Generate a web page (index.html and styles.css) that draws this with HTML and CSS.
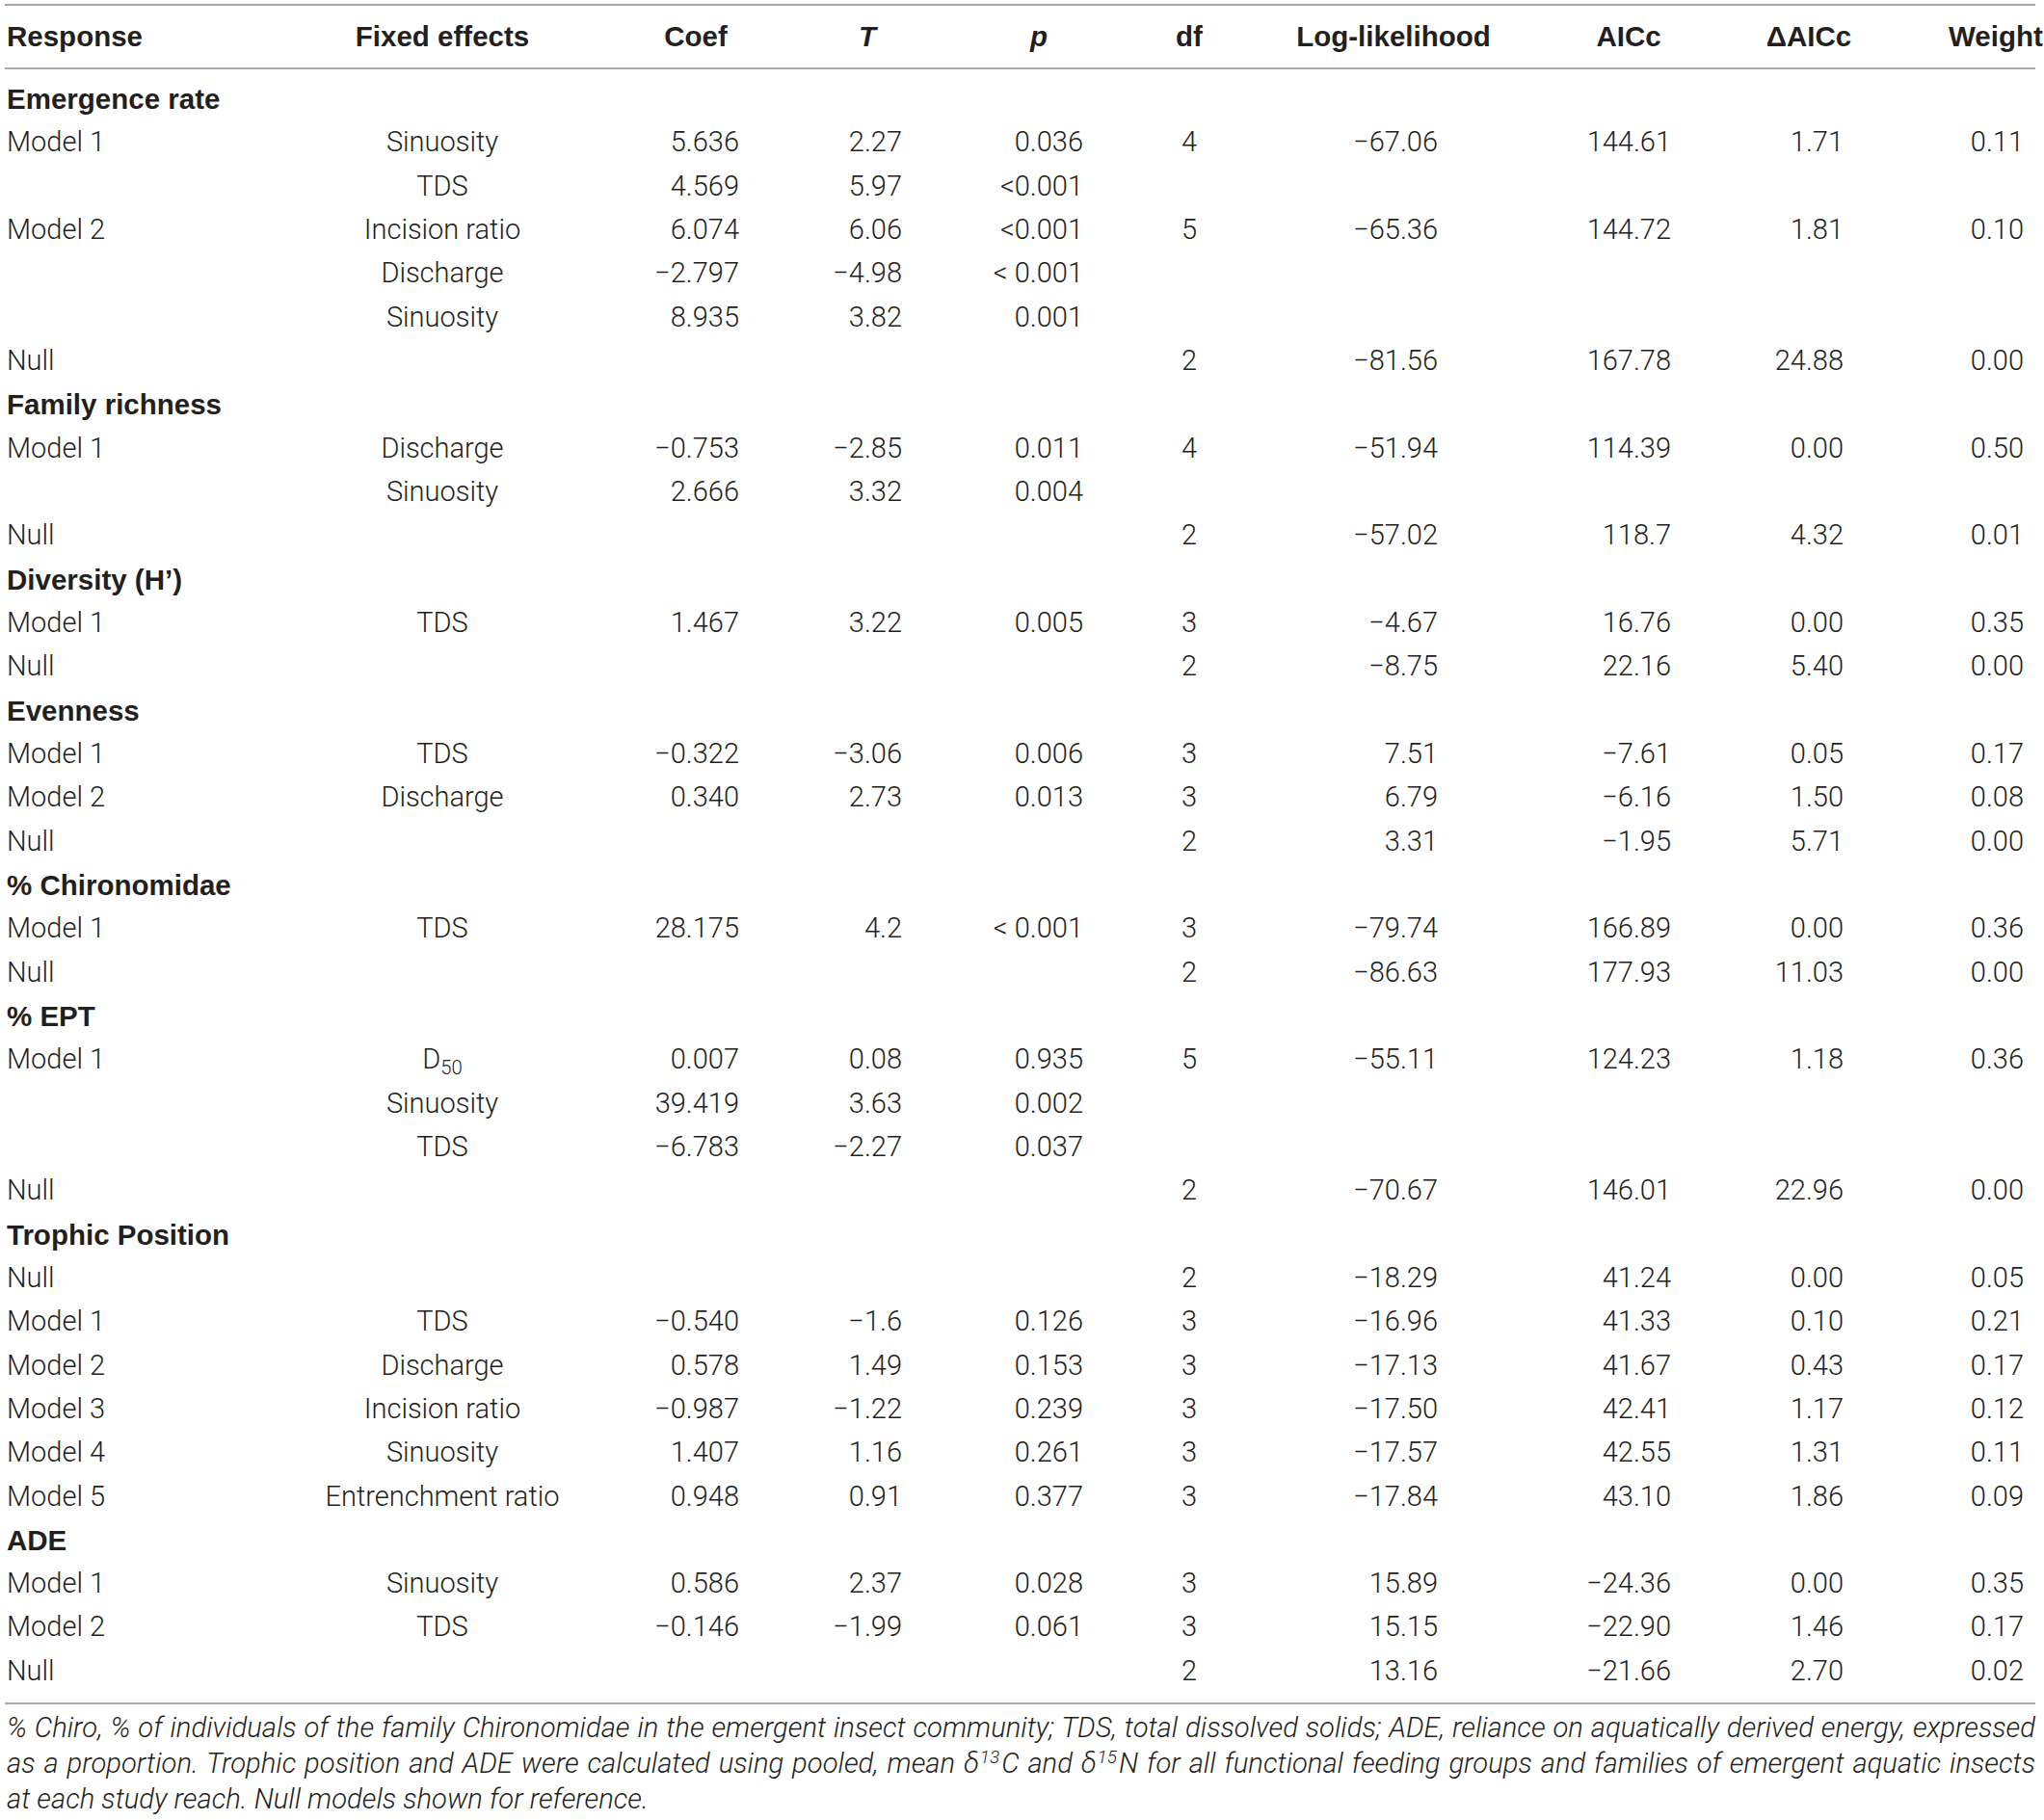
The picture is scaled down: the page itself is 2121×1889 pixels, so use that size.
FILE: index.html
```html
<!DOCTYPE html>
<html lang="en">
<head>
    <meta charset="UTF-8">
    <title>Model selection results</title>
    <link rel="stylesheet" href="styles.css">
</head>
<body>
    <div class="page">
        <table class="results">
            <colgroup>
                <col class="c-resp">
                <col class="c-fixed">
                <col class="c-coef">
                <col class="c-t">
                <col class="c-p">
                <col class="c-df">
                <col class="c-ll">
                <col class="c-aic">
                <col class="c-daic">
                <col class="c-w">
            </colgroup>
            <thead>
                <tr>
                    <th class="resp">Response</th>
                    <th>Fixed effects</th>
                    <th class="coef">Coef</th>
                    <th><i>T</i></th>
                    <th><i>p</i></th>
                    <th>df</th>
                    <th>Log-likelihood</th>
                    <th>AICc</th>
                    <th>ΔAICc</th>
                    <th class="weight">Weight</th>
                </tr>
            </thead>
            <tbody>
                <tr class="group"><td colspan="10">Emergence rate</td></tr>
                <tr><td>Model 1</td><td>Sinuosity</td><td>5.636</td><td>2.27</td><td>0.036</td><td>4</td><td>−67.06</td><td>144.61</td><td>1.71</td><td>0.11</td></tr>
                <tr><td></td><td>TDS</td><td>4.569</td><td>5.97</td><td>&lt;0.001</td><td></td><td></td><td></td><td></td><td></td></tr>
                <tr><td>Model 2</td><td>Incision ratio</td><td>6.074</td><td>6.06</td><td>&lt;0.001</td><td>5</td><td>−65.36</td><td>144.72</td><td>1.81</td><td>0.10</td></tr>
                <tr><td></td><td>Discharge</td><td>−2.797</td><td>−4.98</td><td>&lt; 0.001</td><td></td><td></td><td></td><td></td><td></td></tr>
                <tr><td></td><td>Sinuosity</td><td>8.935</td><td>3.82</td><td>0.001</td><td></td><td></td><td></td><td></td><td></td></tr>
                <tr><td>Null</td><td></td><td></td><td></td><td></td><td>2</td><td>−81.56</td><td>167.78</td><td>24.88</td><td>0.00</td></tr>

                <tr class="group"><td colspan="10">Family richness</td></tr>
                <tr><td>Model 1</td><td>Discharge</td><td>−0.753</td><td>−2.85</td><td>0.011</td><td>4</td><td>−51.94</td><td>114.39</td><td>0.00</td><td>0.50</td></tr>
                <tr><td></td><td>Sinuosity</td><td>2.666</td><td>3.32</td><td>0.004</td><td></td><td></td><td></td><td></td><td></td></tr>
                <tr><td>Null</td><td></td><td></td><td></td><td></td><td>2</td><td>−57.02</td><td>118.7</td><td>4.32</td><td>0.01</td></tr>

                <tr class="group"><td colspan="10">Diversity (H’)</td></tr>
                <tr><td>Model 1</td><td>TDS</td><td>1.467</td><td>3.22</td><td>0.005</td><td>3</td><td>−4.67</td><td>16.76</td><td>0.00</td><td>0.35</td></tr>
                <tr><td>Null</td><td></td><td></td><td></td><td></td><td>2</td><td>−8.75</td><td>22.16</td><td>5.40</td><td>0.00</td></tr>

                <tr class="group"><td colspan="10">Evenness</td></tr>
                <tr><td>Model 1</td><td>TDS</td><td>−0.322</td><td>−3.06</td><td>0.006</td><td>3</td><td>7.51</td><td>−7.61</td><td>0.05</td><td>0.17</td></tr>
                <tr><td>Model 2</td><td>Discharge</td><td>0.340</td><td>2.73</td><td>0.013</td><td>3</td><td>6.79</td><td>−6.16</td><td>1.50</td><td>0.08</td></tr>
                <tr><td>Null</td><td></td><td></td><td></td><td></td><td>2</td><td>3.31</td><td>−1.95</td><td>5.71</td><td>0.00</td></tr>

                <tr class="group"><td colspan="10">% Chironomidae</td></tr>
                <tr><td>Model 1</td><td>TDS</td><td>28.175</td><td>4.2</td><td>&lt; 0.001</td><td>3</td><td>−79.74</td><td>166.89</td><td>0.00</td><td>0.36</td></tr>
                <tr><td>Null</td><td></td><td></td><td></td><td></td><td>2</td><td>−86.63</td><td>177.93</td><td>11.03</td><td>0.00</td></tr>

                <tr class="group"><td colspan="10">% EPT</td></tr>
                <tr><td>Model 1</td><td>D<sub>50</sub></td><td>0.007</td><td>0.08</td><td>0.935</td><td>5</td><td>−55.11</td><td>124.23</td><td>1.18</td><td>0.36</td></tr>
                <tr><td></td><td>Sinuosity</td><td>39.419</td><td>3.63</td><td>0.002</td><td></td><td></td><td></td><td></td><td></td></tr>
                <tr><td></td><td>TDS</td><td>−6.783</td><td>−2.27</td><td>0.037</td><td></td><td></td><td></td><td></td><td></td></tr>
                <tr><td>Null</td><td></td><td></td><td></td><td></td><td>2</td><td>−70.67</td><td>146.01</td><td>22.96</td><td>0.00</td></tr>

                <tr class="group"><td colspan="10">Trophic Position</td></tr>
                <tr><td>Null</td><td></td><td></td><td></td><td></td><td>2</td><td>−18.29</td><td>41.24</td><td>0.00</td><td>0.05</td></tr>
                <tr><td>Model 1</td><td>TDS</td><td>−0.540</td><td>−1.6</td><td>0.126</td><td>3</td><td>−16.96</td><td>41.33</td><td>0.10</td><td>0.21</td></tr>
                <tr><td>Model 2</td><td>Discharge</td><td>0.578</td><td>1.49</td><td>0.153</td><td>3</td><td>−17.13</td><td>41.67</td><td>0.43</td><td>0.17</td></tr>
                <tr><td>Model 3</td><td>Incision ratio</td><td>−0.987</td><td>−1.22</td><td>0.239</td><td>3</td><td>−17.50</td><td>42.41</td><td>1.17</td><td>0.12</td></tr>
                <tr><td>Model 4</td><td>Sinuosity</td><td>1.407</td><td>1.16</td><td>0.261</td><td>3</td><td>−17.57</td><td>42.55</td><td>1.31</td><td>0.11</td></tr>
                <tr><td>Model 5</td><td>Entrenchment ratio</td><td>0.948</td><td>0.91</td><td>0.377</td><td>3</td><td>−17.84</td><td>43.10</td><td>1.86</td><td>0.09</td></tr>

                <tr class="group"><td colspan="10">ADE</td></tr>
                <tr><td>Model 1</td><td>Sinuosity</td><td>0.586</td><td>2.37</td><td>0.028</td><td>3</td><td>15.89</td><td>−24.36</td><td>0.00</td><td>0.35</td></tr>
                <tr><td>Model 2</td><td>TDS</td><td>−0.146</td><td>−1.99</td><td>0.061</td><td>3</td><td>15.15</td><td>−22.90</td><td>1.46</td><td>0.17</td></tr>
                <tr><td>Null</td><td></td><td></td><td></td><td></td><td>2</td><td>13.16</td><td>−21.66</td><td>2.70</td><td>0.02</td></tr>
            </tbody>
        </table>

        <div class="note">
            <span class="line">% Chiro, % of individuals of the family Chironomidae in the emergent insect community; TDS, total dissolved solids; ADE, reliance on aquatically derived energy, expressed</span>
            <span class="line">as a proportion. Trophic position and ADE were calculated using pooled, mean δ<sup>13</sup>C and δ<sup>15</sup>N for all functional feeding groups and families of emergent aquatic insects</span>
            <span class="line last">at each study reach. Null models shown for reference.</span>
        </div>
    </div>
</body>
</html>
```

FILE: styles.css
```css
body {
    margin: 0;
    padding: 0;
    background-color: #ffffff;
    color: #231f20;
    font-family: Roboto, "Liberation Sans", sans-serif;
    font-weight: 300;
}
.page {
    width: 2107px;
    padding: 4px 0 0 5px;
}
.results {
    width: 2107px;
    border-collapse: collapse;
    table-layout: fixed;
    font-size: 29px;
}
.c-resp { width: 295px; }
.c-fixed { width: 318px; }
.c-coef { width: 192px; }
.c-t { width: 180px; }
.c-p { width: 176px; }
.c-df { width: 136px; }
.c-ll { width: 288px; }
.c-aic { width: 200px; }
.c-daic { width: 174px; }
.c-w { width: 148px; }

.results thead tr {
    border-top: 2px solid #a7a7a7;
    border-bottom: 2px solid #a7a7a7;
}
.results th {
    height: 64px;
    padding: 0;
    font-family: "Liberation Sans", Arial, sans-serif;
    font-size: 29.5px;
    font-weight: bold;
    text-align: center;
    white-space: nowrap;
}
.results th.resp {
    text-align: left;
    padding-left: 2px;
}
.results th.coef {
    padding-left: 16px;
}
.results th.weight {
    padding-left: 58px;
}
.results tbody {
    border-bottom: 2px solid #a7a7a7;
}
.results td {
    height: 45.33px;
    padding: 0;
    line-height: 45.33px;
    white-space: nowrap;
    text-align: right;
    vertical-align: middle;
}
.results tbody tr:first-child td {
    padding-top: 8px;
}
.results tbody tr:last-child td {
    padding-bottom: 10px;
}
.results td:nth-child(1) {
    text-align: left;
    padding-left: 2px;
}
.results td:nth-child(2) {
    text-align: center;
}
.results td:nth-child(3) { padding-right: 43px; }
.results td:nth-child(4) { padding-right: 54px; }
.results td:nth-child(5) { padding-right: 42px; }
.results td:nth-child(6) { text-align: center; }
.results td:nth-child(7) { padding-right: 98px; }
.results td:nth-child(8) { padding-right: 56px; }
.results td:nth-child(9) { padding-right: 51px; }
.results td:nth-child(10) { padding-right: 12px; }

.results tr.group td {
    text-align: left;
    font-family: "Liberation Sans", Arial, sans-serif;
    font-size: 29.5px;
    font-weight: bold;
}
.results sub {
    font-size: 70%;
    vertical-align: -6px;
    line-height: 0;
}
.note {
    margin: 6px 0 0 2px;
    font-size: 29.2px;
    line-height: 37px;
    font-style: italic;
}
.note .line {
    display: block;
    text-align: justify;
    text-align-last: justify;
    white-space: nowrap;
}
.note .line.last {
    text-align: left;
    text-align-last: left;
}
.note sup {
    font-size: 65%;
    vertical-align: 10px;
    line-height: 0;
    margin: 0 2px 0 1px;
}
```
